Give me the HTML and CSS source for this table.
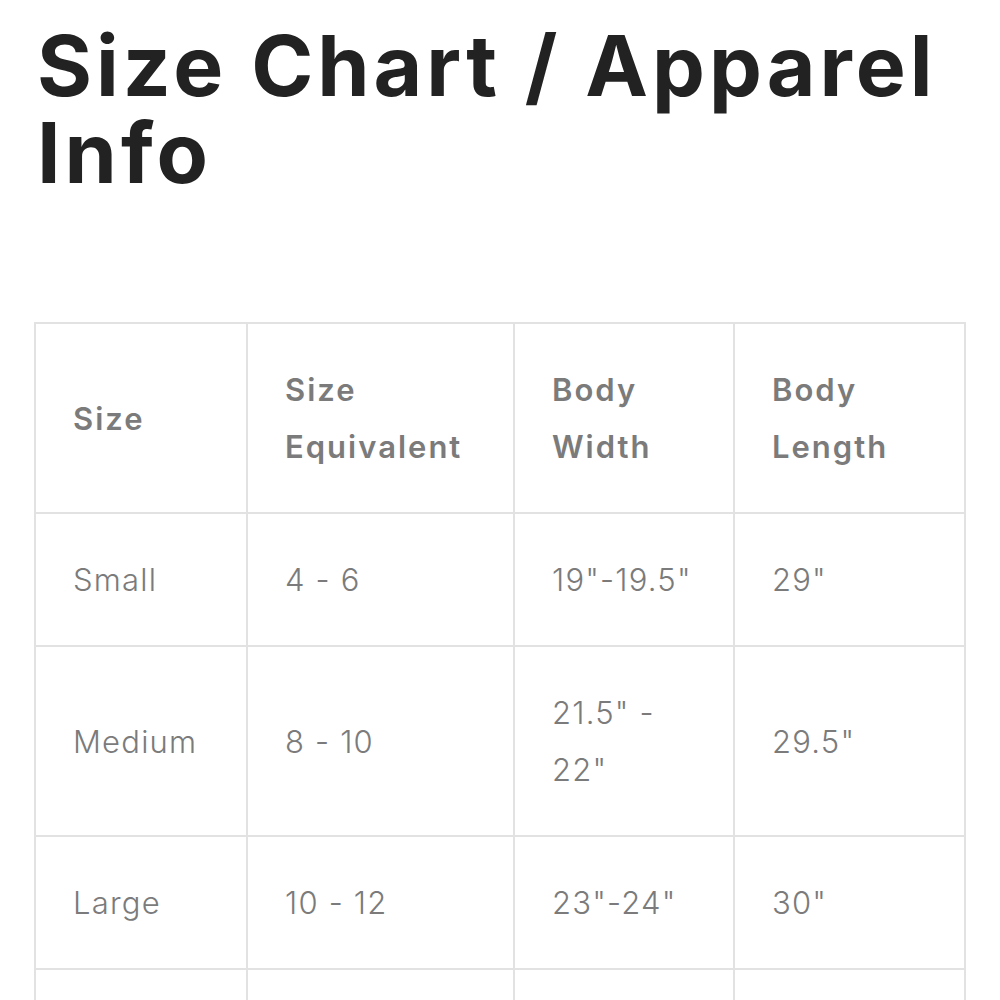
FILE: index.html
```html
<!DOCTYPE html>
<html lang="en">
<head>
<meta charset="utf-8">
<title>Size Chart / Apparel Info</title>
<link rel="stylesheet" href="styles.css">
</head>
<body>
<main class="page">
  <h1 class="title">Size Chart / Apparel Info</h1>
  <table class="chart">
    <colgroup>
      <col class="c1"><col class="c2"><col class="c3"><col class="c4">
    </colgroup>
    <thead>
      <tr><th>Size</th><th>Size Equivalent</th><th>Body Width</th><th>Body Length</th></tr>
    </thead>
    <tbody>
      <tr><td>Small</td><td>4 - 6</td><td>19"-19.5"</td><td>29"</td></tr>
      <tr><td>Medium</td><td>8 - 10</td><td>21.5" - 22"</td><td>29.5"</td></tr>
      <tr><td>Large</td><td>10 - 12</td><td>23"-24"</td><td>30"</td></tr>
      <tr><td>X-Large</td><td>14 - 16</td><td>25"-26"</td><td>31"</td></tr>
    </tbody>
  </table>
</main>
</body>
</html>
```
FILE: styles.css
```css
html, body {
  margin: 0;
  padding: 0;
  background: #ffffff;
}
.page {
  padding: 0 34px;
  font-family: Inter, "Noto Sans", sans-serif;
}
.title {
  margin: 22px 0 0 3px;
  font-size: 84px;
  line-height: 87px;
  font-weight: 700;
  color: #222222;
  letter-spacing: 4px;
}
.chart {
  margin-top: 126px;
  width: 930px;
  border-collapse: collapse;
  table-layout: fixed;
  color: #7b7b7b;
  font-size: 31px;
  line-height: 57px;
}
.c1 { width: 212px; }
.c2 { width: 267px; }
.c3 { width: 220px; }
.c4 { width: 231px; }
.chart th, .chart td {
  border: 2px solid #e2e2e2;
  padding: 37px 20px 37px 37px;
  text-align: left;
  vertical-align: middle;
}
.chart th {
  font-weight: 600;
  letter-spacing: 2px;
}
.chart td {
  font-weight: 300;
  letter-spacing: 1.2px;
}
```
